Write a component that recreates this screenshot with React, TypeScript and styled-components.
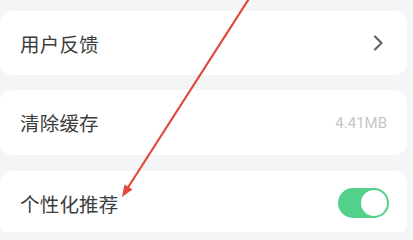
import React, { useState } from "react";
import styled, { createGlobalStyle } from "styled-components";

const Global = createGlobalStyle`
  html, body { margin: 0; padding: 0; background: #f4f5f7; }
  body { font-family: "Noto Sans CJK SC", "Noto Sans", sans-serif; overflow: hidden; }
`;

const Page = styled.div`
  position: relative;
  width: 413px;
  height: 232px;
  overflow: hidden;
  background: #f4f5f7;
  padding-top: 11px;
  box-sizing: border-box;
  display: flex;
  flex-direction: column;
  gap: 15px;
`;

const Card = styled.div<{ $h?: number; $mt?: number }>`
  background: #ffffff;
  border-radius: 12px;
  margin-right: 6px;
  margin-top: ${(p) => p.$mt ?? 0}px;
  height: ${(p) => p.$h ?? 64}px;
  flex-shrink: 0;
  display: flex;
  align-items: center;
  justify-content: space-between;
  padding: 0 19px 0 20px;
  box-sizing: border-box;
`;

const Label = styled.span`
  font-size: 19.5px;
  color: #3d3d3d;
  letter-spacing: 0.2px;
`;

const Value = styled.span`
  font-family: "Roboto", "Noto Sans", sans-serif;
  font-size: 15px;
  color: #c6c6c6;
  margin-right: 1px;
`;

const Toggle = styled.button<{ $on: boolean }>`
  width: 51px;
  height: 30px;
  border-radius: 15px;
  border: none;
  padding: 0;
  margin-right: -1px;
  background: ${(p) => (p.$on ? "#52d18a" : "#dcdcdc")};
  display: flex;
  align-items: center;
  justify-content: ${(p) => (p.$on ? "flex-end" : "flex-start")};
  cursor: pointer;
`;

const Knob = styled.span`
  width: 26px;
  height: 26px;
  border-radius: 50%;
  background: #fff;
  margin: 0 2px;
`;

const Overlay = styled.svg`
  position: absolute;
  left: 0;
  top: 0;
  pointer-events: none;
`;

export default function App() {
  const [on, setOn] = useState(true);
  return (
    <>
      <Global />
      <Page>
        <Card $h={64}>
          <Label>用户反馈</Label>
          <svg width="12" height="16" viewBox="0 0 12 16" style={{ marginRight: 4 }}>
            <polyline points="3,1.5 9.5,8 3,14.5" fill="none" stroke="#666" strokeWidth="2.2" strokeLinecap="round" strokeLinejoin="round" />
          </svg>
        </Card>
        <Card $h={65}>
          <Label>清除缓存</Label>
          <Value>4.41MB</Value>
        </Card>
        <Card $h={64} $mt={1}>
          <Label>个性化推荐</Label>
          <Toggle $on={on} onClick={() => setOn(!on)}>
            <Knob />
          </Toggle>
        </Card>
        <Overlay width="413" height="232" viewBox="0 0 413 232">
          <line x1="252" y1="-6" x2="127" y2="189" stroke="#e2483d" strokeWidth="2.2" />
          <polygon points="122,197 132.5,189.5 124.5,184.5" fill="#e2483d" />
        </Overlay>
      </Page>
    </>
  );
}
